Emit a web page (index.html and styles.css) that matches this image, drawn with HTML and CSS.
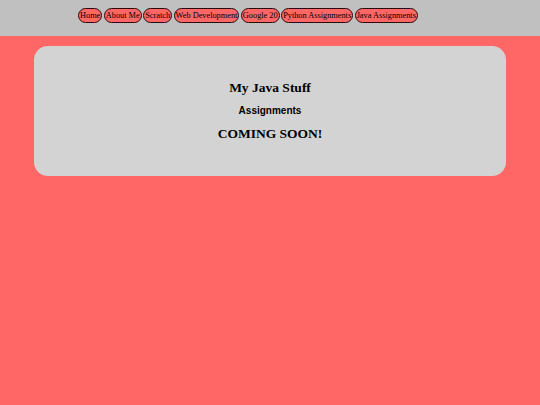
FILE: index.html
```html
<!DOCTYPE html>
<html>
<head>
<meta charset="utf-8">
<link rel="stylesheet" href="styles.css">
</head>
<body>
<header class="topbar">
  <nav class="nav">
    <button class="navbtn">Home</button>
    <button class="navbtn">About Me</button>
    <button class="navbtn">Scratch</button>
    <button class="navbtn">Web Development</button>
    <button class="navbtn">Google 20</button>
    <button class="navbtn">Python Assignments</button>
    <button class="navbtn">Java Assignments</button>
  </nav>
</header>
<main class="card">
  <h3 class="title">My Java Stuff</h3>
  <h4 class="sub">Assignments</h4>
  <h3 class="soon">COMING SOON!</h3>
</main>
</body>
</html>
```
FILE: styles.css
```css
html, body {
  margin: 0;
  padding: 0;
}
body {
  background: #ff6666;
  font-family: "Liberation Serif", "Times New Roman", serif;
  width: 540px;
  height: 405px;
  overflow: hidden;
}
.topbar {
  background: #c0c0c0;
  height: 36px;
  box-sizing: border-box;
  padding: 8px 0 0 78px;
}
.nav {
  display: flex;
  gap: 1.5px;
}
.navbtn {
  font-family: "Liberation Serif", "Times New Roman", serif;
  font-size: 8.3px;
  line-height: 12px;
  height: 15px;
  padding: 0 1px;
  margin: 0;
  background: #ff6666;
  color: #000;
  border: 1px solid #2a0a0a;
  border-radius: 8px;
}
.card {
  margin: 10px 34px 0 34px;
  height: 130px;
  box-sizing: border-box;
  background: #d3d3d3;
  border-radius: 14px;
  display: flex;
  flex-direction: column;
  align-items: center;
  padding-top: 34px;
}
.title, .soon {
  margin: 0;
  font-size: 13.5px;
  font-weight: bold;
  line-height: 16px;
}
.sub {
  margin: 9px 0 9px;
  font-family: "Liberation Sans", Arial, sans-serif;
  font-size: 10px;
  line-height: 12px;
  font-weight: bold;
}
```
